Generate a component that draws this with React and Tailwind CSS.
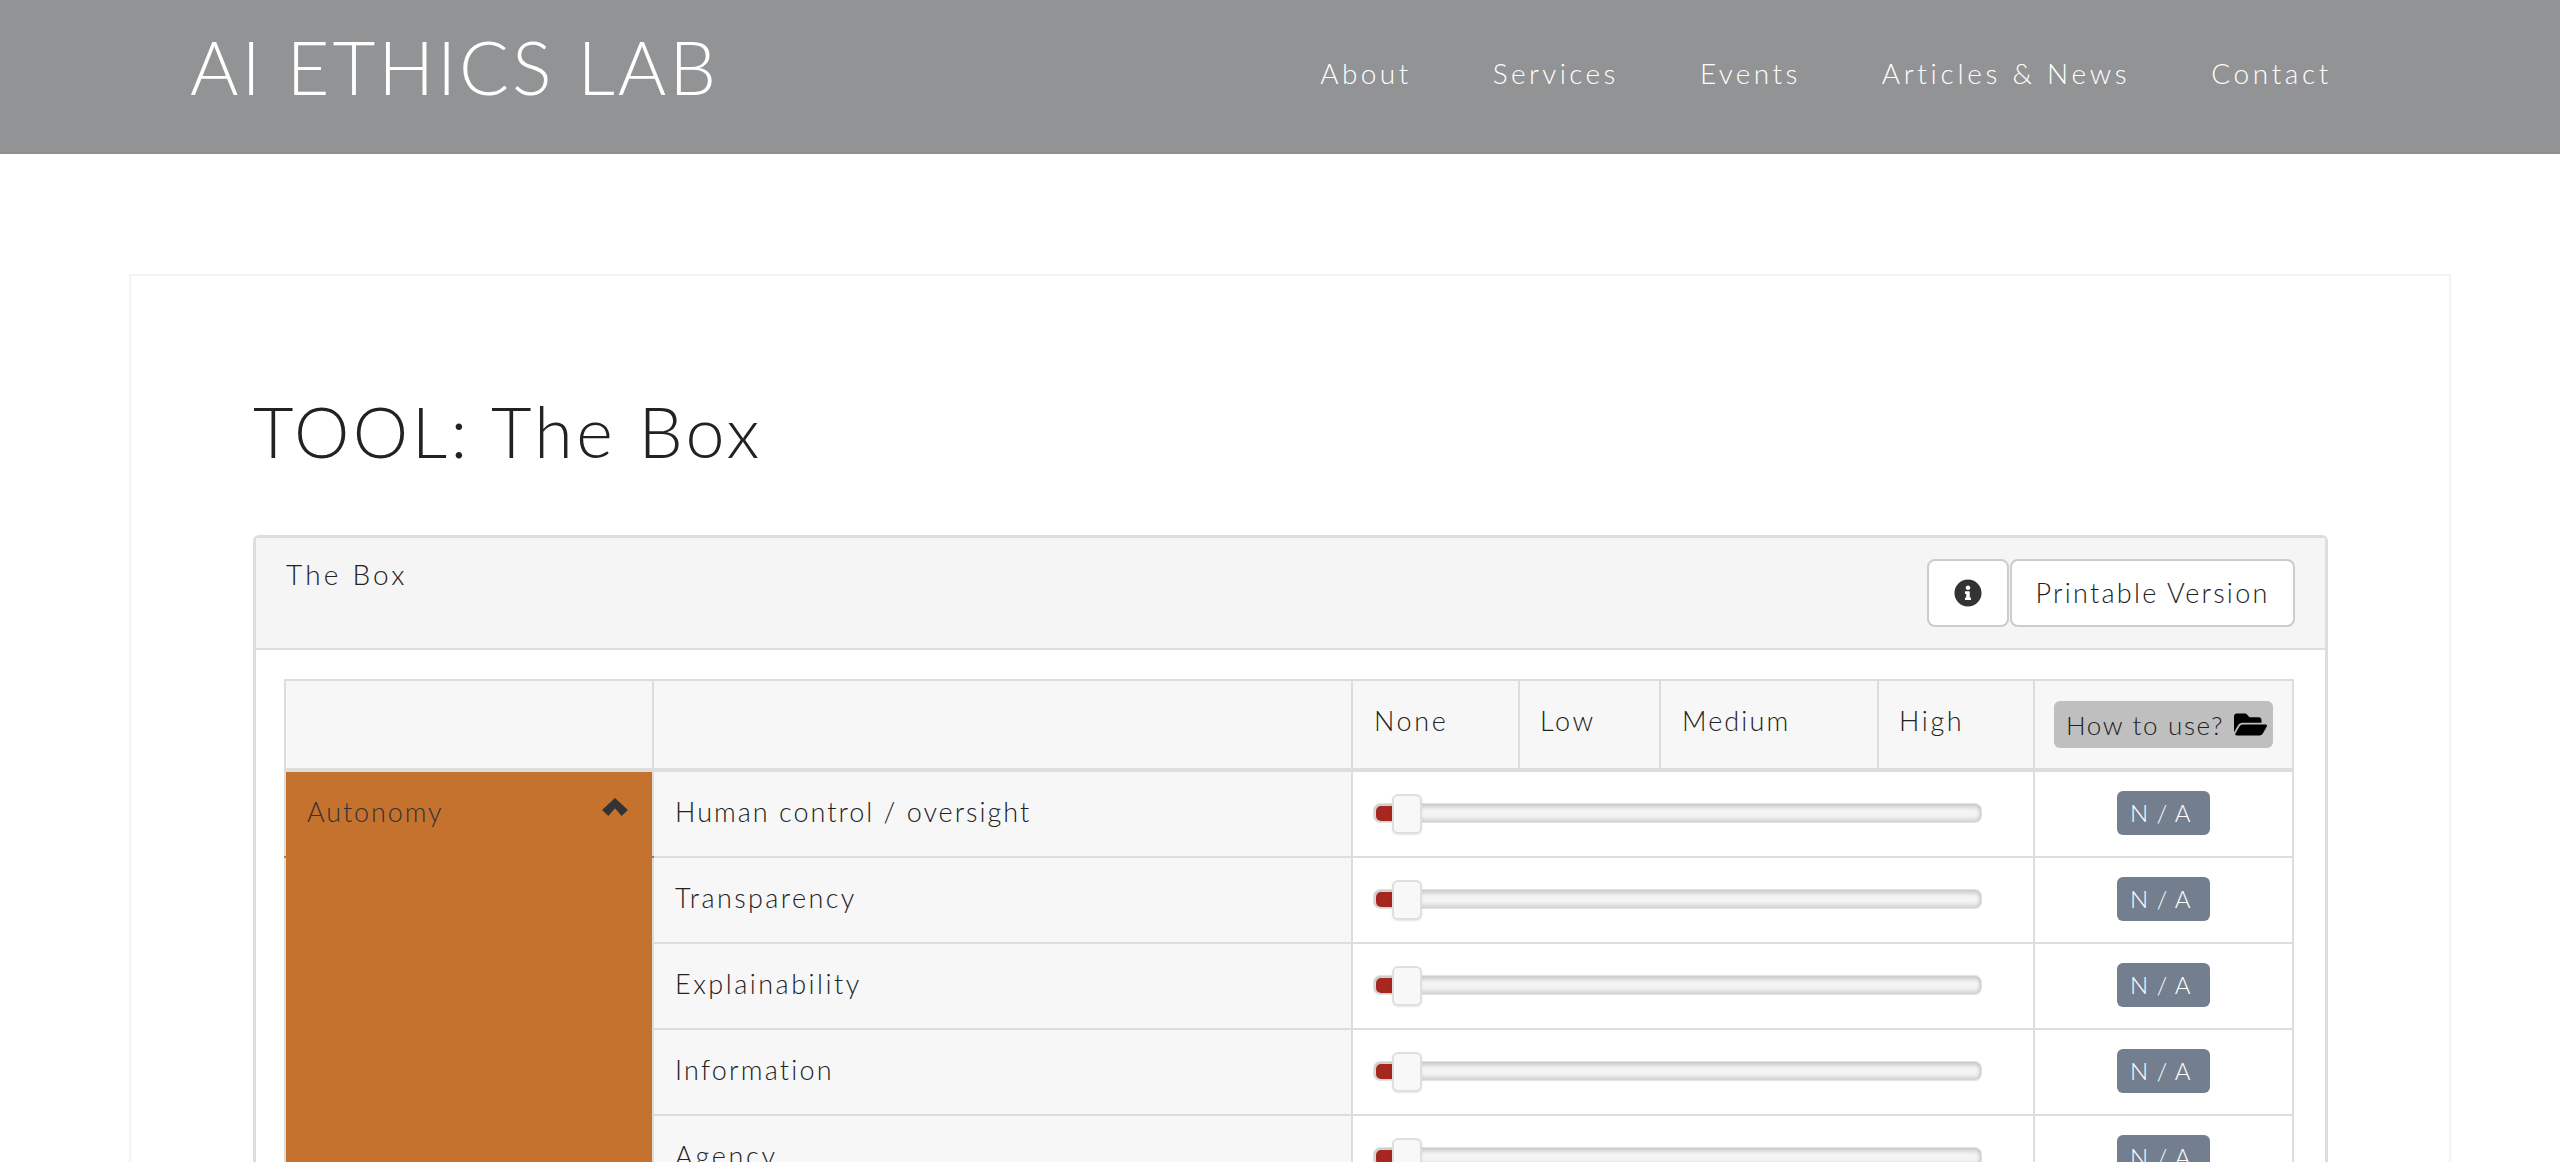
import { FaFolderOpen, FaInfoCircle } from "react-icons/fa";

const navItems = [
  { label: "About", cls: "tracking-[3.4px]" },
  { label: "Services", cls: "tracking-[3.4px]" },
  { label: "Events", cls: "tracking-[3.4px]" },
  { label: "Articles & News", cls: "tracking-[3.7px]" },
  { label: "Contact", cls: "tracking-[3.6px]" },
];

const rows = [
  { label: "Human control / oversight", cls: "tracking-[2px]" },
  { label: "Transparency", cls: "tracking-[2.4px]" },
  { label: "Explainability", cls: "tracking-[2.5px]" },
  { label: "Information", cls: "tracking-[2.2px]" },
  { label: "Agency", cls: "tracking-[2.7px]" },
];

function ChevronUp() {
  return (
    <svg width="26" height="18" viewBox="0 0 25.4 17.7" className="mt-[6px] fill-[#333333]">
      <path d="M12.7 0 25.4 11.7 19.2 17.7 12.7 10 6.2 17.7 0 11.7Z" />
    </svg>
  );
}

function Slider() {
  return (
    <div className="relative h-5 w-[609px] rounded-[7px] border border-[#e2e2e2] bg-[#f4f4f4] shadow-[inset_0_3px_4px_rgba(0,0,0,0.18),inset_0_-3px_4px_rgba(0,0,0,0.14)]">
      <div className="absolute left-0.5 top-0.5 h-[15px] w-[22px] rounded-l-[5px] bg-[#a5271f]" />
      <div className="absolute left-[18px] top-[-10px] h-10 w-[30px] rounded-md border-2 border-[#dfdfdf] bg-[#f8f8f8] shadow-[0_1px_2px_rgba(0,0,0,0.1)]" />
    </div>
  );
}

function Row({ label, cls }) {
  return (
    <div className="flex h-[86px] border-b-2 border-[#dddddd]">
      <div className={`w-[699px] border-r-2 border-[#dddddd] bg-[#f7f7f7] pl-[21px] pt-5 text-[27px] leading-[40px] text-[#222222] ${cls}`}>
        {label}
      </div>
      <div className="flex w-[682px] items-center border-r-2 border-[#dddddd] bg-white pb-0.5 pl-5">
        <Slider />
      </div>
      <div className="flex flex-1 items-center justify-center bg-white pb-0.5">
        <span className="h-11 w-[93px] rounded-md bg-[#737f8f] pl-[13px] text-[24px] leading-[44px] tracking-[1px] text-white">
          N / A
        </span>
      </div>
    </div>
  );
}

export default function App() {
  return (
    <div className="h-[1162px] overflow-hidden bg-white font-['Lato','Liberation_Sans',sans-serif] font-light text-[#222222]">
      <header className="flex h-[154px] items-start justify-between border-b-2 border-[#8c8d8e] bg-[#929394] pl-[190px] pr-[228px]">
        <a className="pt-[23px] text-[74px] leading-[88px] tracking-[2.9px] text-white">AI ETHICS LAB</a>
        <nav className="flex gap-[81px] pt-[52px]">
          {navItems.map((item) => (
            <a key={item.label} className={`text-[28px] leading-[42px] text-white ${item.cls}`}>
              {item.label}
            </a>
          ))}
        </nav>
      </header>

      <main className="ml-[129px] mt-[120px] w-[2322px] border-2 border-[#f3f3f3] bg-white pl-[122px] pr-[121px] pt-[113px]">
        <h1 className="text-[70px] leading-[84px] tracking-[3.4px] text-[#222222]">TOOL: The Box</h1>

        <section className="mt-[62px] rounded-md border-[3px] border-[#dddddd]">
          <div className="flex h-[112px] items-start justify-between border-b-2 border-[#dddddd] bg-[#f5f5f5] px-[30px]">
            <span className="pt-[15px] text-[28px] leading-[42px] tracking-[3.2px]">The Box</span>
            <div className="flex gap-px pt-[21px]">
              <button className="flex h-[68px] w-[82px] items-center justify-center rounded-lg border-2 border-[#cccccc] bg-white">
                <FaInfoCircle className="text-[28px] text-[#333333]" />
              </button>
              <button className="h-[68px] w-[285px] rounded-lg border-2 border-[#cccccc] bg-white text-[27px] tracking-[2.25px]">
                Printable Version
              </button>
            </div>
          </div>

          <div className="pl-[28px] pr-[31px] pt-[29px]">
            <div className="border-x-2 border-t-2 border-[#dddddd]">
              <div className="flex h-[91px] border-b-4 border-[#dddddd] bg-[#f7f7f7] text-[27px] leading-[40px] tracking-[2.6px]">
                <div className="w-[368px] border-r-2 border-[#dddddd]" />
                <div className="w-[699px] border-r-2 border-[#dddddd]" />
                <div className="w-[167px] border-r-2 border-[#dddddd] pl-[21px] pt-[20px]">None</div>
                <div className="w-[141px] border-r-2 border-[#dddddd] pl-[20px] pt-[20px]">Low</div>
                <div className="w-[218px] border-r-2 border-[#dddddd] pl-[21px] pt-[20px] tracking-[2.1px]">Medium</div>
                <div className="w-[156px] border-r-2 border-[#dddddd] pl-[20px] pt-[20px]">High</div>
                <div className="flex-1 pl-[19px] pt-[20px]">
                  <span className="flex h-[47px] w-[219px] items-center gap-2.5 rounded-md bg-[#bfbfbf] pl-[12px] text-[26px] tracking-[1.65px] text-[#222222]">
                    How to use?
                    <FaFolderOpen className="shrink-0 text-[33px] text-black" />
                  </span>
                </div>
              </div>

              <div className="flex">
                <div className="relative w-[368px] shrink-0 border-r-2 border-[#dddddd] bg-[#c6722f]">
                  <div className="flex items-start justify-between pl-[21px] pr-[24px] pt-5 text-[27px] leading-[40px] tracking-[1.9px] text-[#333333]">
                    Autonomy
                    <ChevronUp />
                  </div>
                  <div className="absolute left-[-2px] top-[84px] h-0.5 w-[370px] bg-[#c6722f]" />
                </div>
                <div className="flex-1">
                  {rows.map((row) => (
                    <Row key={row.label} label={row.label} cls={row.cls} />
                  ))}
                </div>
              </div>
            </div>
          </div>
        </section>
      </main>
    </div>
  );
}
